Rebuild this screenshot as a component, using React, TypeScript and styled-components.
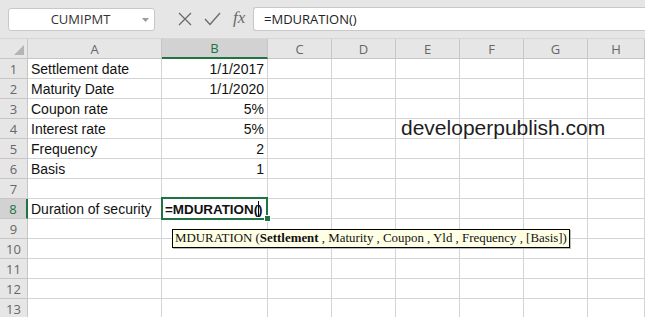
import React from "react";
import styled, { createGlobalStyle } from "styled-components";

const GlobalStyle = createGlobalStyle`
  html, body {
    margin: 0;
    padding: 0;
    background: #ffffff;
  }
  body {
    width: 645px;
    height: 317px;
    overflow: hidden;
  }
`;

const colWidths = "28px 134px 106px 64px 64px 64px 64px 64px 1fr";
const columns = ["A", "B", "C", "D", "E", "F", "G", "H"];

const rows: { a?: string; b?: string }[] = [
  { a: "Settlement date", b: "1/1/2017" },
  { a: "Maturity Date", b: "1/1/2020" },
  { a: "Coupon rate", b: "5%" },
  { a: "Interest rate", b: "5%" },
  { a: "Frequency", b: "2" },
  { a: "Basis", b: "1" },
  {},
  { a: "Duration of security" },
  {},
  {},
  {},
  {},
  {},
];

const App = () => {
  return (
    <Page>
      <GlobalStyle />
      <Toolbar>
        <NameBox>
          <span>CUMIPMT</span>
          <Caret>
            <svg width="7" height="4" viewBox="0 0 7 4">
              <path d="M0 0 L7 0 L3.5 4 Z" fill="#9a9a9a" />
            </svg>
          </Caret>
        </NameBox>
        <Icons>
          <svg width="14" height="14" viewBox="0 0 14 14">
            <path d="M1 1 L13 13 M13 1 L1 13" stroke="#6a6a6a" strokeWidth="1.3" fill="none" />
          </svg>
          <svg width="17" height="14" viewBox="0 0 17 14">
            <path d="M1 7 L6 12.5 L16 1" stroke="#6a6a6a" strokeWidth="1.3" fill="none" />
          </svg>
          <Fx>fx</Fx>
        </Icons>
        <FormulaInput>=MDURATION()</FormulaInput>
      </Toolbar>

      <Sheet>
        <Corner>
          <svg width="10" height="10" viewBox="0 0 10 10">
            <path d="M10 0 L10 10 L0 10 Z" fill="#b4b4b4" />
          </svg>
        </Corner>
        {columns.map((c) => (
          <ColHead key={c} $active={c === "B"}>
            {c}
          </ColHead>
        ))}

        {rows.map((r, i) => (
          <React.Fragment key={i}>
            <RowHead $active={i === 7}>{i + 1}</RowHead>
            <Cell>{r.a}</Cell>
            {i === 7 ? (
              <ActiveCell>
                <b>=MDURATION(</b>
                <TextCursor />
                <b>)</b>
                <FillHandle />
              </ActiveCell>
            ) : (
              <Cell $right>{r.b}</Cell>
            )}
            <Cell />
            <Cell />
            <Cell />
            <Cell />
            <Cell />
            <Cell />
          </React.Fragment>
        ))}

        <Watermark>developerpublish.com</Watermark>
        <Tip>
          MDURATION (<b>Settlement</b> , Maturity , Coupon , Yld , Frequency , [Basis])
        </Tip>
      </Sheet>
    </Page>
  );
};

export default App;

const Page = styled.div`
  width: 645px;
  height: 317px;
  overflow: hidden;
  background: #ffffff;
`;

const Toolbar = styled.div`
  height: 39px;
  background: #e6e6e6;
  display: flex;
  align-items: center;
  padding-left: 8px;
  box-sizing: border-box;
  border-bottom: 1px solid #d6d6d6;
`;

const NameBox = styled.div`
  width: 147px;
  height: 23px;
  box-sizing: border-box;
  background: #ffffff;
  border: 1px solid #c8c8c8;
  border-radius: 3px;
  display: flex;
  align-items: center;
  justify-content: center;
  position: relative;
  font-family: "Open Sans", sans-serif;
  font-size: 13px;
  color: #333;
  span {
    margin-left: -2px;
  }
`;

const Caret = styled.div`
  position: absolute;
  right: 5px;
  top: 9px;
  display: flex;
`;

const Icons = styled.div`
  display: flex;
  align-items: center;
  gap: 12px;
  margin-left: 23px;
  width: 75px;
`;

const Fx = styled.span`
  font-family: "Liberation Serif", serif;
  font-style: italic;
  font-size: 17px;
  color: #6a6a6a;
  margin-top: -3px;
`;

const FormulaInput = styled.div`
  flex: 1;
  height: 24px;
  margin-top: -1px;
  background: #ffffff;
  border: 1px solid #c8c8c8;
  border-right: none;
  border-radius: 3px 0 0 3px;
  box-sizing: border-box;
  display: flex;
  align-items: center;
  padding-left: 10px;
  font-family: "Open Sans", sans-serif;
  font-size: 13px;
  color: #222;
`;

const Sheet = styled.div`
  position: relative;
  display: grid;
  grid-template-columns: ${colWidths};
  grid-template-rows: 20px;
  grid-auto-rows: 20px;
  font-family: "Liberation Sans", Arial, sans-serif;
  font-size: 14px;
  color: #111;
`;

const Corner = styled.div`
  background: #e6e6e6;
  border-right: 1px solid #c6c6c6;
  border-bottom: 1px solid #c6c6c6;
  display: flex;
  align-items: flex-end;
  justify-content: flex-end;
  padding: 0 3px 3px 0;
`;

const ColHead = styled.div<{ $active?: boolean }>`
  background: ${(p) => (p.$active ? "#d2d2d2" : "#e6e6e6")};
  border-right: 1px solid #c6c6c6;
  border-bottom: ${(p) => (p.$active ? "2px solid #217346" : "1px solid #c6c6c6")};
  display: flex;
  align-items: center;
  justify-content: center;
  font-family: "Open Sans", sans-serif;
  font-size: 13px;
  color: ${(p) => (p.$active ? "#217346" : "#666")};
`;

const RowHead = styled.div<{ $active?: boolean }>`
  background: ${(p) => (p.$active ? "#d2d2d2" : "#e6e6e6")};
  border-right: ${(p) => (p.$active ? "2px solid #217346" : "1px solid #c6c6c6")};
  border-bottom: 1px solid #c6c6c6;
  display: flex;
  align-items: center;
  justify-content: center;
  font-family: "Open Sans", sans-serif;
  font-size: 13px;
  color: ${(p) => (p.$active ? "#217346" : "#666")};
`;

const Cell = styled.div<{ $right?: boolean }>`
  border-right: 1px solid #d4d4d4;
  border-bottom: 1px solid #d4d4d4;
  display: flex;
  align-items: center;
  justify-content: ${(p) => (p.$right ? "flex-end" : "flex-start")};
  padding: 1px 3px 0;
  white-space: nowrap;
  overflow: visible;
`;

const ActiveCell = styled.div`
  position: relative;
  border-right: 1px solid #d4d4d4;
  border-bottom: 1px solid #d4d4d4;
  display: flex;
  align-items: center;
  padding: 1px 3px 0;
  white-space: nowrap;
  &::after {
    content: "";
    position: absolute;
    left: -1px;
    top: -2px;
    right: -1px;
    bottom: -2px;
    border: 2px solid #217346;
    pointer-events: none;
  }
  b {
    font-weight: 700;
    font-size: 13.4px;
  }
`;

const TextCursor = styled.span`
  display: inline-block;
  width: 1px;
  height: 16px;
  background: #000;
  margin: 0 -1px 0 0;
`;

const FillHandle = styled.span`
  position: absolute;
  right: -4px;
  bottom: -4px;
  width: 5px;
  height: 5px;
  background: #217346;
  border: 1px solid #fff;
  z-index: 2;
`;

const Watermark = styled.div`
  position: absolute;
  left: 401px;
  top: 77px;
  font-family: "Liberation Sans", Arial, sans-serif;
  font-size: 21px;
  color: #1e1e1e;
`;

const Tip = styled.div`
  position: absolute;
  left: 172px;
  top: 190px;
  height: 19px;
  box-sizing: border-box;
  padding: 0 2px;
  background: #ffffe6;
  border: 1px solid #000;
  font-family: "Liberation Serif", serif;
  font-size: 12.9px;
  color: #111;
  display: flex;
  align-items: center;
  white-space: pre;
  box-shadow: 1px 1px 0 #bbb;
  b {
    font-weight: 700;
  }
`;
